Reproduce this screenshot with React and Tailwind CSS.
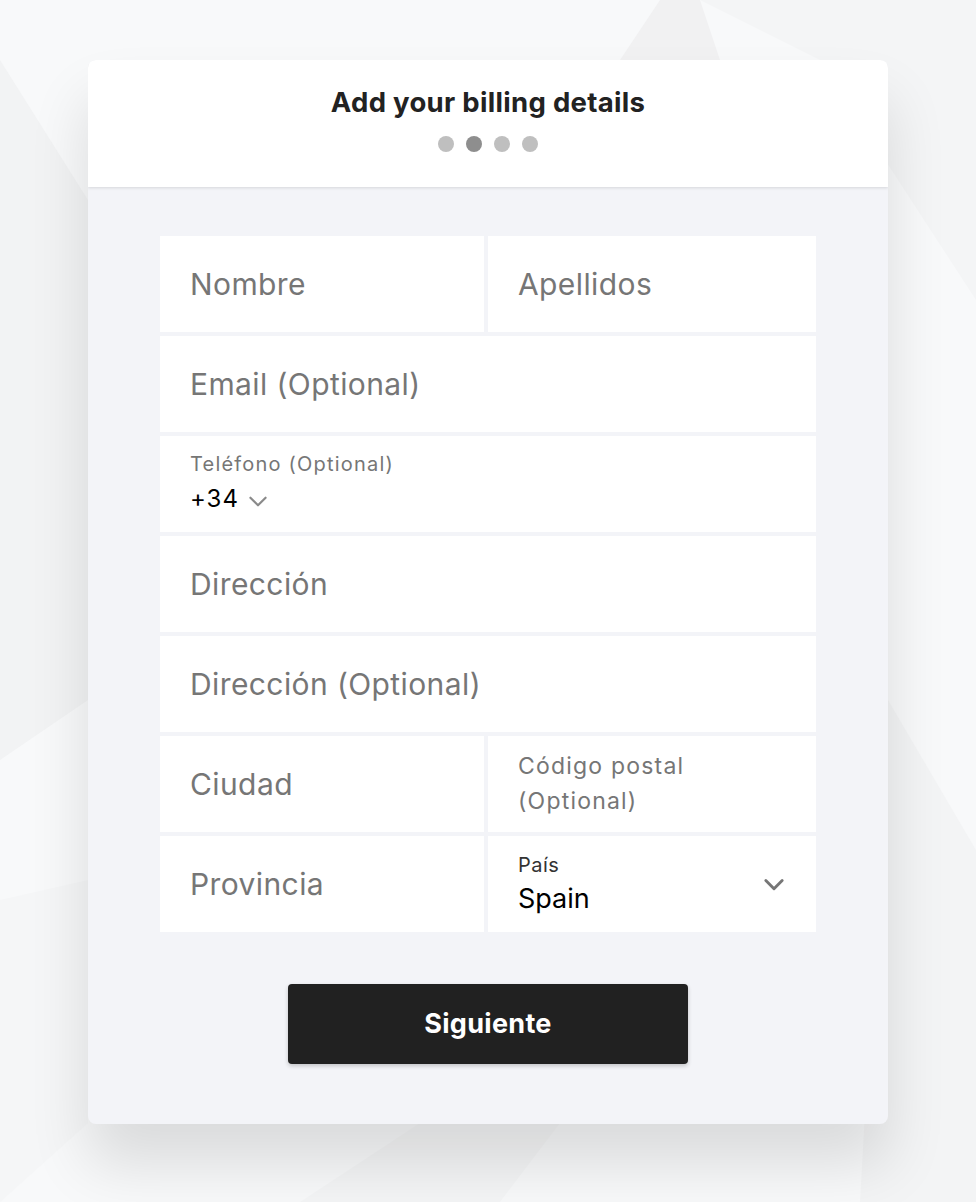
import React from 'react';

const Chevron = ({ className, strokeWidth = 2.5 }) => (
  <svg viewBox="0 0 24 24" className={className} fill="none" stroke="currentColor" strokeWidth={strokeWidth} strokeLinecap="round" strokeLinejoin="round">
    <path d="M5 9l7 7 7-7" />
  </svg>
);

const Field = ({ placeholder }) => (
  <div className="bg-white h-[96px] flex items-center pl-[30px]">
    <span className="text-[30px] tracking-[0.4px] text-[#767676]">{placeholder}</span>
  </div>
);

const App = () => {
  return (
    <div className="relative min-h-[1202px] bg-[#f8f9fa] overflow-hidden" style={{ fontFamily: 'Inter, "Noto Sans", sans-serif' }}>
      {/* faint background facets */}
      <svg className="absolute inset-0 w-full h-full" viewBox="0 0 976 1202" preserveAspectRatio="none">
        <polygon points="660,0 700,0 720,60 620,60" fill="#f1f1f2" />
        <polygon points="700,0 976,0 976,300 820,60" fill="#f4f5f6" />
        <polygon points="0,60 88,200 88,700 0,760" fill="#f2f3f4" />
        <polygon points="0,900 88,880 88,1123 0,1202" fill="#f5f6f7" />
        <polygon points="888,700 976,850 976,1202 860,1202" fill="#f3f4f5" />
        <polygon points="300,1202 420,1123 560,1123 500,1202" fill="#f4f5f6" />
      </svg>

      <div className="relative pt-[60px] flex justify-center">
        <div className="w-[800px] rounded-lg overflow-hidden bg-[#f3f4f8] shadow-[0_40px_60px_rgba(0,0,0,0.12)]">
          <div className="bg-white h-[127px] flex flex-col items-center pt-[24px] shadow-[0_1px_3px_rgba(0,0,0,0.12)] relative">
            <h1 className="text-[27.5px] tracking-[0.3px] font-bold text-[#222] leading-[36px]">Add your billing details</h1>
            <div className="flex gap-[12px] mt-[16px]">
              <span className="w-4 h-4 rounded-full bg-[#bfbfbf]"></span>
              <span className="w-4 h-4 rounded-full bg-[#8e8e8e]"></span>
              <span className="w-4 h-4 rounded-full bg-[#bfbfbf]"></span>
              <span className="w-4 h-4 rounded-full bg-[#bfbfbf]"></span>
            </div>
          </div>

          <div className="px-[72px] pt-[49px] pb-[60px]">
            <div className="flex flex-col gap-1">
              <div className="grid grid-cols-[324px_328px] gap-1">
                <Field placeholder="Nombre" />
                <Field placeholder="Apellidos" />
              </div>
              <Field placeholder="Email (Optional)" />
              <div className="bg-white h-[96px] flex flex-col justify-center gap-[4px] pl-[30px]">
                <span className="text-[20px] tracking-[1.2px] text-[#767676] leading-[26px]">Teléfono (Optional)</span>
                <div className="flex items-center gap-[6px] h-[36px]">
                  <span className="text-[24px] tracking-[1px] text-black leading-[36px]">+34</span>
                  <Chevron className="w-[26px] h-[26px] text-[#8a8a8a] mt-[4px]" strokeWidth={2} />
                </div>
              </div>
              <Field placeholder="Dirección" />
              <Field placeholder="Dirección (Optional)" />
              <div className="grid grid-cols-[324px_328px] gap-1">
                <Field placeholder="Ciudad" />
                <div className="bg-white h-[96px] flex flex-col justify-center pl-[30px]">
                  <span className="text-[23px] tracking-[1.2px] text-[#767676] leading-[35px]">Código postal</span>
                  <span className="text-[23px] tracking-[1.2px] text-[#767676] leading-[35px]">(Optional)</span>
                </div>
              </div>
              <div className="grid grid-cols-[324px_328px] gap-1">
                <Field placeholder="Provincia" />
                <div className="bg-white h-[96px] flex items-center justify-between pl-[30px] pr-[28px]">
                  <div className="flex flex-col gap-[3px]">
                    <span className="text-[20px] tracking-[0.5px] text-[#333] leading-[26px]">País</span>
                    <span className="text-[27px] text-black leading-[36px]">Spain</span>
                  </div>
                  <Chevron className="w-[28px] h-[28px] text-[#767676]" />
                </div>
              </div>
            </div>

            <div className="flex justify-center mt-[52px]">
              <button className="w-[400px] h-[80px] rounded bg-[#212121] text-white text-[27px] tracking-[0.3px] font-bold shadow-[0_2px_4px_rgba(0,0,0,0.2)]">
                Siguiente
              </button>
            </div>
          </div>
        </div>
      </div>
    </div>
  );
};

export default App;
